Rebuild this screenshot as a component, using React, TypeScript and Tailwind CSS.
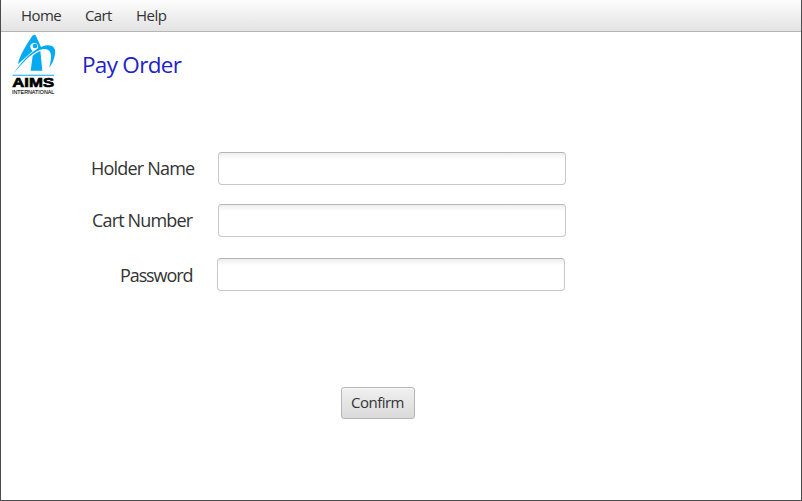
function Logo() {
  return (
    <svg className="mt-[2px] ml-[9px] h-[64px] w-[50px] shrink-0" viewBox="30 103 150 192" role="img" aria-label="AIMS International">
      <g fill="#06aaf0">
        <path d="M97 108 L103 105 L107 107 L124 144 L112 148 C117 139 112 130 104 130 C95 130 90 136 91 142 C92 148 95 151 98 154 C82 168 67 184 54 193 C57 170 80 134 97 108Z" />
        <circle cx="105" cy="139" r="7" />
        <path d="M98 169 C104 163 112 158 121 154 L127 213 H92Z" />
        <path d="M41 220 C72 178 105 143 139 137 C158 135 168 145 165 163 C163 178 157 193 147 205 C151 192 155 174 152 162 C149 149 136 145 119 151 C91 162 65 194 41 220Z" />
        <path d="M38 225H162V228H38Z" />
      </g>
      <text x="37" y="261" textLength="125" lengthAdjust="spacingAndGlyphs" fontFamily="Liberation Sans, sans-serif" fontWeight="700" fontSize="41" stroke="#000" strokeWidth="2">AIMS</text>
      <text x="36" y="282" textLength="127" lengthAdjust="spacingAndGlyphs" fontFamily="Liberation Sans, sans-serif" fontSize="17" stroke="#000" strokeWidth=".3">INTERNATIONAL</text>
    </svg>
  );
}

const inputClass =
  "h-[33px] w-[348px] rounded-[4px] border border-[#c8c8c8] border-t-[#b5b5b5] bg-linear-to-b from-[#eeeeee] to-white to-20% px-2 outline-none";

export default function App() {
  return (
    <div className="flex h-[501px] w-[802px] flex-col overflow-hidden border-x border-b border-[#4b4b4d] bg-white font-['Open_Sans','Noto_Sans',sans-serif] text-[#333333]">
      <nav className="flex h-8 shrink-0 items-center border-b border-[#b5b5b5] bg-linear-to-b from-[#fdfdfd] to-[#e3e3e3] pl-5 text-[15px]">
        <a className="w-16 tracking-[-0.6px]">Home</a>
        <a className="w-[51px] tracking-[-0.6px]">Cart</a>
        <a className="tracking-[-0.5px]">Help</a>
      </nav>
      <header className="flex h-[66px] shrink-0">
        <Logo />
        <h1 className="mt-[15px] ml-[22px] text-[22.5px] leading-[36px] tracking-[-0.7px] text-[#2222c8]">Pay Order</h1>
      </header>
      <form className="mt-[54px] flex flex-col text-[18px]" onSubmit={(e) => e.preventDefault()}>
        <div className="flex items-center">
          <label htmlFor="holder" className="w-[217px] pl-[90px] tracking-[-0.8px]">Holder Name</label>
          <input id="holder" className={inputClass} />
        </div>
        <div className="mt-[19px] flex items-center">
          <label htmlFor="number" className="w-[217px] pl-[91px] tracking-[-0.85px]">Cart Number</label>
          <input id="number" className={inputClass} />
        </div>
        <div className="mt-[21px] flex items-center">
          <label htmlFor="password" className="w-[216px] pt-[2px] pl-[119px] tracking-[-1.1px]">Password</label>
          <input id="password" type="password" className={inputClass} />
        </div>
        <button className="mt-[96px] ml-[340px] h-8 w-[74px] rounded-[3px] border border-[#b5b5b5] bg-linear-to-b from-[#f0f0f0] to-[#dadada] pr-px pb-[2px] text-[15px] tracking-[-0.5px] shadow-[inset_0_1px_0_#fafafa]">Confirm</button>
      </form>
    </div>
  );
}
